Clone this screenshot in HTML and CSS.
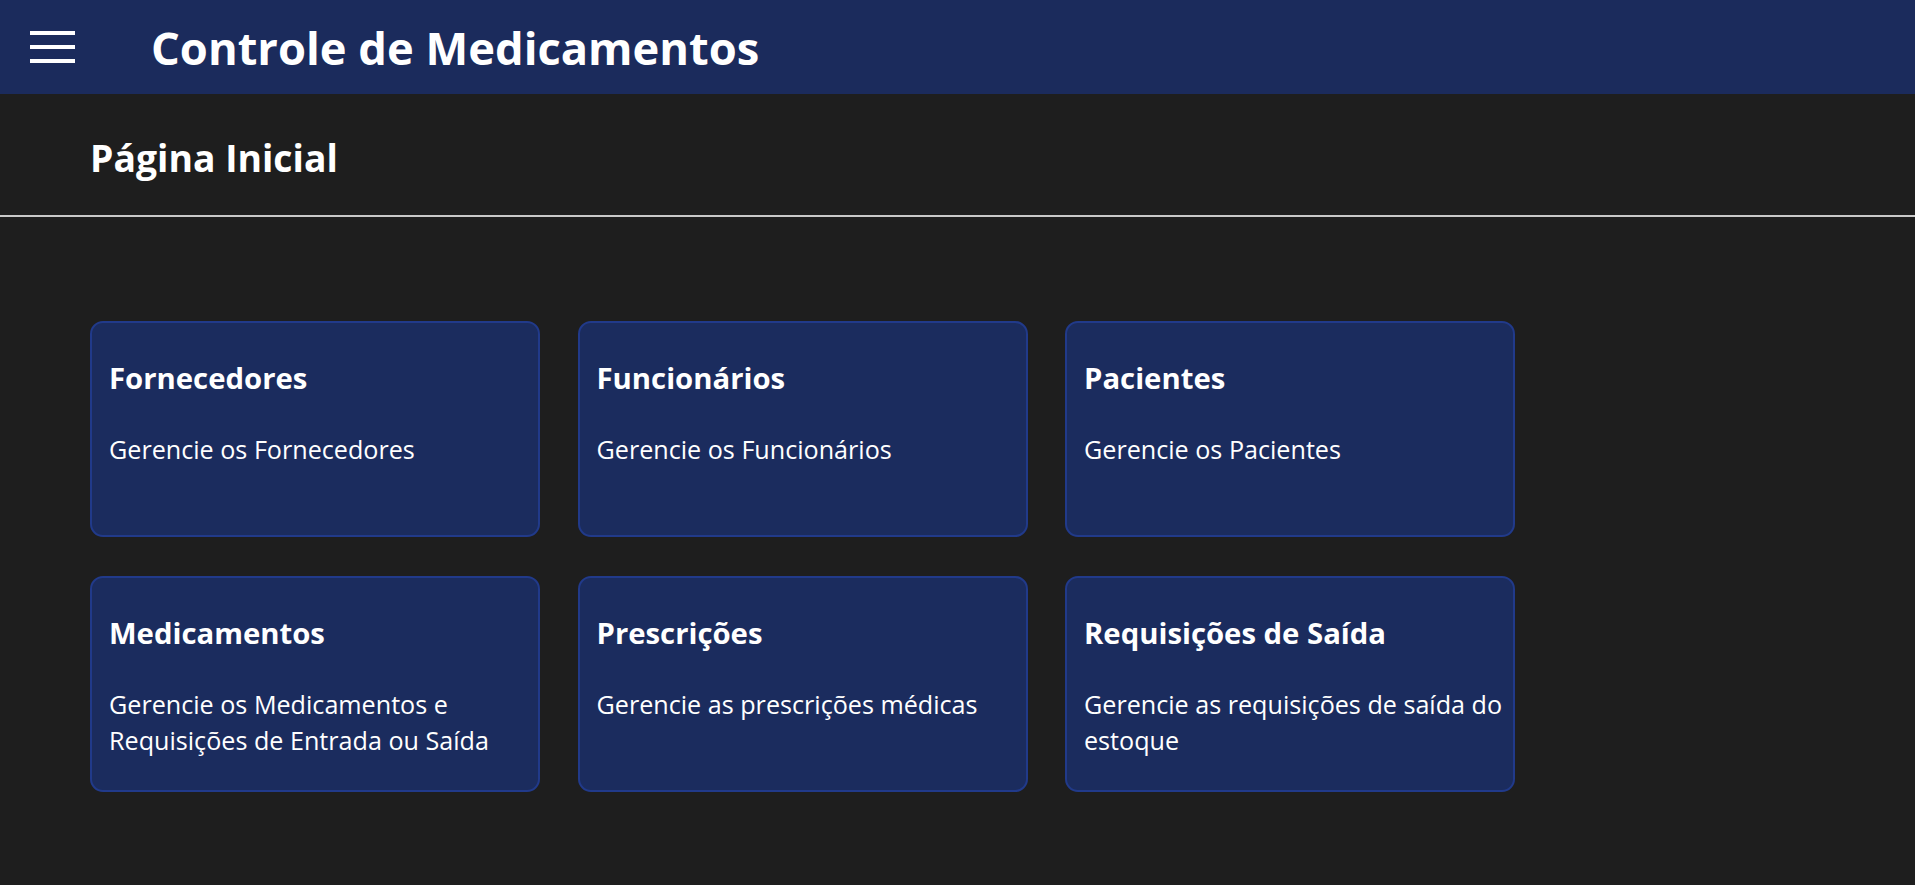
FILE: index.html
```html
<!DOCTYPE html>
<html lang="pt-BR">
<head>
<meta charset="utf-8">
<title>Controle de Medicamentos</title>
<link rel="stylesheet" href="styles.css">
</head>
<body>
<header class="topbar">
  <button class="menu-btn" aria-label="Menu"><span></span><span></span><span></span></button>
  <h1 class="app-title">Controle de Medicamentos</h1>
</header>
<main>
  <section class="page-head">
    <h2 class="page-title">Página Inicial</h2>
  </section>
  <hr class="divider">
  <section class="cards">
    <a class="card" href="#"><h3 class="card-title">Fornecedores</h3><p class="card-text">Gerencie os Fornecedores</p></a>
    <a class="card" href="#"><h3 class="card-title">Funcionários</h3><p class="card-text">Gerencie os Funcionários</p></a>
    <a class="card" href="#"><h3 class="card-title">Pacientes</h3><p class="card-text">Gerencie os Pacientes</p></a>
    <a class="card" href="#"><h3 class="card-title">Medicamentos</h3><p class="card-text">Gerencie os Medicamentos e Requisições de Entrada ou Saída</p></a>
    <a class="card" href="#"><h3 class="card-title">Prescrições</h3><p class="card-text">Gerencie as prescrições médicas</p></a>
    <a class="card" href="#"><h3 class="card-title">Requisições de Saída</h3><p class="card-text">Gerencie as requisições de saída do estoque</p></a>
  </section>
</main>
</body>
</html>
```
FILE: styles.css
```css
* { box-sizing: border-box; }
html, body { margin: 0; padding: 0; }
body {
  background: #1e1e1e;
  color: #ffffff;
  font-family: "Open Sans", "Noto Sans", sans-serif;
  min-height: 885px;
}
.topbar {
  height: 94px;
  background: #1b2b5c;
  display: flex;
  align-items: center;
}
.menu-btn {
  margin-left: 30px;
  width: 45px;
  padding: 0;
  border: 0;
  background: transparent;
  display: flex;
  flex-direction: column;
  gap: 10px;
  cursor: pointer;
}
.menu-btn span {
  display: block;
  height: 4px;
  background: #ffffff;
}
.app-title {
  margin: 2px 0 0 76px;
  font-size: 45.3px;
  font-weight: 700;
  line-height: 1;
}
.page-head {
  padding: 0 0 0 90px;
}
.page-title {
  margin: 0;
  padding-top: 39px;
  font-size: 37.3px;
  font-weight: 700;
  line-height: 49px;
}
.divider {
  margin: 33px 0 0;
  border: 0;
  height: 2px;
  background: #c9c9c9;
}
.cards {
  display: grid;
  grid-template-columns: repeat(3, 450px);
  column-gap: 37.5px;
  row-gap: 39px;
  padding: 104px 0 0 90px;
}
.card {
  display: block;
  height: 216px;
  background: #1b2c5e;
  border: 2px solid #213a8a;
  border-radius: 13px;
  padding: 35px 6px 0 17px;
  color: #ffffff;
  text-decoration: none;
}
.card-title {
  margin: 0;
  font-size: 29.3px;
  font-weight: 700;
  line-height: 40px;
}
.card-text {
  margin: 33px 0 0;
  font-size: 25.15px;
  line-height: 36px;
}
```
